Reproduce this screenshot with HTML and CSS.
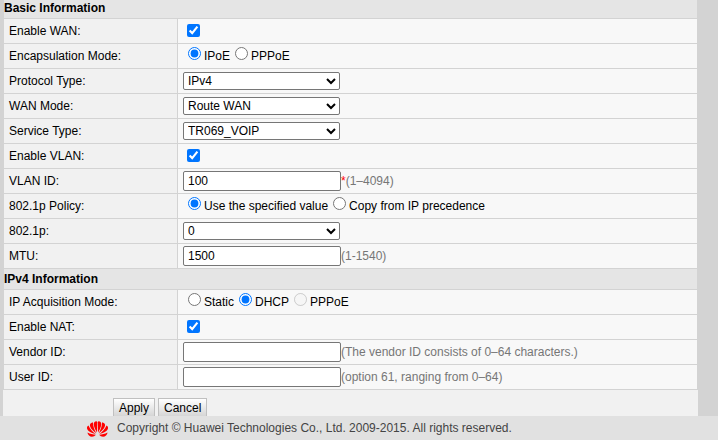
FILE: index.html
```html
<!DOCTYPE html>
<html lang="en">
<head>
  <meta charset="UTF-8" />
  <meta name="viewport" content="width=device-width, initial-scale=1.0" />
  <title>WAN Configuration</title>
  <link rel="stylesheet" href="styles.css">
</head>
<body>
  <div class="page">
    <form class="wan-form">
      <table class="config-table">
        <colgroup>
          <col class="col-label">
          <col>
        </colgroup>
        <!-- Basic Information -->
        <tbody>
          <tr class="section basic-section"><th colspan="2">Basic Information</th></tr>
          <tr>
            <td><label for="enableWan">Enable WAN:</label></td>
            <td><input type="checkbox" id="enableWan" checked></td>
          </tr>
          <tr>
            <td>Encapsulation Mode:</td>
            <td>
              <div class="radio-group" role="radiogroup" aria-label="Encapsulation Mode">
                <label><input type="radio" name="encapMode" checked>IPoE</label>
                <label><input type="radio" name="encapMode">PPPoE</label>
              </div>
            </td>
          </tr>
          <tr>
            <td><label for="protocolType">Protocol Type:</label></td>
            <td><select id="protocolType"><option>IPv4</option></select></td>
          </tr>
          <tr>
            <td><label for="wanMode">WAN Mode:</label></td>
            <td><select id="wanMode"><option>Route WAN</option></select></td>
          </tr>
          <tr>
            <td><label for="serviceType">Service Type:</label></td>
            <td><select id="serviceType"><option>TR069_VOIP</option></select></td>
          </tr>
          <tr>
            <td><label for="enableVlan">Enable VLAN:</label></td>
            <td><input type="checkbox" id="enableVlan" checked></td>
          </tr>
          <tr>
            <td><label for="vlanId">VLAN ID:</label></td>
            <td>
              <div class="field">
                <input type="text" id="vlanId" value="100"><span class="required">*</span><span class="hint">(1–4094)</span>
              </div>
            </td>
          </tr>
          <tr>
            <td>802.1p Policy:</td>
            <td>
              <div class="radio-group" role="radiogroup" aria-label="802.1p Policy">
                <label><input type="radio" name="priPolicy" checked>Use the specified value</label>
                <label><input type="radio" name="priPolicy">Copy from IP precedence</label>
              </div>
            </td>
          </tr>
          <tr>
            <td><label for="priority">802.1p:</label></td>
            <td><select id="priority"><option>0</option></select></td>
          </tr>
          <tr>
            <td><label for="mtu">MTU:</label></td>
            <td>
              <div class="field">
                <input type="text" id="mtu" value="1500"><span class="hint">(1-1540)</span>
              </div>
            </td>
          </tr>
        </tbody>
        <!-- IPv4 Information -->
        <tbody>
          <tr class="section"><th colspan="2">IPv4 Information</th></tr>
          <tr>
            <td>IP Acquisition Mode:</td>
            <td>
              <div class="radio-group" role="radiogroup" aria-label="IP Acquisition Mode">
                <label><input type="radio" name="ipMode">Static</label>
                <label><input type="radio" name="ipMode" checked>DHCP</label>
                <label><input type="radio" name="ipMode" disabled>PPPoE</label>
              </div>
            </td>
          </tr>
          <tr>
            <td><label for="enableNat">Enable NAT:</label></td>
            <td><input type="checkbox" id="enableNat" checked></td>
          </tr>
          <tr>
            <td><label for="vendorId">Vendor ID:</label></td>
            <td>
              <div class="field">
                <input type="text" id="vendorId"><span class="hint">(The vendor ID consists of 0–64 characters.)</span>
              </div>
            </td>
          </tr>
          <tr>
            <td><label for="userId">User ID:</label></td>
            <td>
              <div class="field">
                <input type="text" id="userId"><span class="hint">(option 61, ranging from 0–64)</span>
              </div>
            </td>
          </tr>
        </tbody>
      </table>
      <div class="actions">
        <button type="button">Apply</button>
        <button type="button">Cancel</button>
      </div>
    </form>
  </div>

  <footer class="footer">
    <svg class="logo" viewBox="0 0 42 32" fill="#f00" aria-hidden="true">
      <g id="petals">
        <path d="M20 23C14 14 12 5 15 2C17 0 20 0 20.500 2Z"/>
        <path d="M18.500 24.500C9 18 5 11 6 7C7 4 10 3 12 3C12 11 15 18 18.500 24.500Z"/>
        <path d="M17.500 26C7 24 0 19 0 14C0 11 1 10 3 9C6 16 11 22 17.500 26Z"/>
        <path d="M18 27.500C14 32 8 33 4 29C2 27 1 25 1 23C6 26 12 27 18 27.500Z"/>
      </g>
      <use href="#petals" transform="translate(42 0) scale(-1 1)"/>
    </svg>
    <span>Copyright © Huawei Technologies Co., Ltd. 2009-2015. All rights reserved.</span>
  </footer>
</body>
</html>
```
FILE: styles.css
```css
:root {
  --line: #d3d3d3;
  --panel: #f1f1f1;
  --value-bg: #f8f8f8;
  --section-bg: #e5e5e5;
  --footer-bg: #e1e1e1;
}

* {
  box-sizing: border-box;
}
body {
  margin: 0;
  padding-right: 4px;
  background: #fff;
  color: #000;
  font-family: "Liberation Sans", Arial, sans-serif;
  font-size: 12px;
  min-height: 100vh;
  display: flex;
  flex-direction: column;
}

.page {
  padding: 0 20px 0 3px;
  background: var(--line);
}
.wan-form {
  background: var(--panel);
}

/* Settings table */
.config-table {
  width: 100%;
  table-layout: fixed;
  border-spacing: 0;
  border-left: 1px solid var(--line);
  border-right: 1px solid var(--line);
}
.col-label {
  width: 174px;
}
.config-table td {
  height: 25px;
  padding: 0 5px;
  border-bottom: 1px solid var(--line);
  background: var(--value-bg);
}
.config-table td:first-child {
  background: var(--panel);
  border-right: 1px solid var(--line);
}
.section th {
  height: 21px;
  padding: 0;
  text-align: left;
  background: var(--section-bg);
  border-bottom: 1px solid var(--line);
}
.basic-section th {
  height: 19px;
  padding-bottom: 3px;
}

/* Form controls */
input, select, button {
  font: inherit;
  color: inherit;
}
input[type="checkbox"] {
  display: block;
  width: 13px;
  height: 13px;
  margin: 0 4px 2px;
}
select {
  display: block;
  width: 157px;
  height: 18px;
  background: #fff;
  border: 1px solid #767676;
  border-radius: 2px;
}
input[type="text"] {
  width: 158px;
  height: 20px;
  padding: 0 4px;
  background: #fff;
  border: 1px solid #767676;
  border-radius: 2px;
}
.field {
  display: flex;
  align-items: center;
}
.required {
  color: #f00;
}
.hint {
  color: #767676;
}
.radio-group {
  display: flex;
}
.radio-group label {
  display: flex;
  align-items: center;
}
.radio-group input {
  width: 13px;
  height: 13px;
  margin: 0 3px 5px 5px;
}

.actions {
  display: flex;
  align-items: flex-start;
  gap: 3px;
  height: 26px;
  padding: 8px 0 0 110px;
  overflow: hidden;
}
.actions button {
  flex: none;
  height: 20px;
  padding: 0 5px;
  border: 1px solid #c0c0c0;
  background: linear-gradient(#fff, #d3d3d3);
}

.footer {
  flex: 1;
  display: flex;
  align-items: center;
  gap: 9px;
  padding-left: 87px;
  background: var(--footer-bg);
  color: #444;
}
.logo {
  width: 21px;
  height: 16px;
  margin-top: 2px;
}
```
